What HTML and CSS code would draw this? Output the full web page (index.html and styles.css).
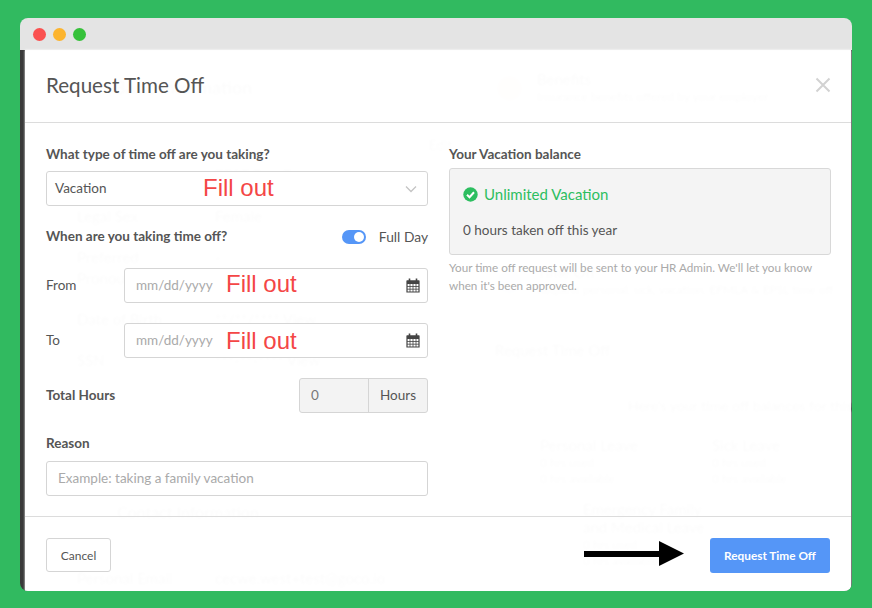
FILE: index.html
```html
<!DOCTYPE html>
<html lang="en">
<head>
    <meta charset="UTF-8">
    <meta name="viewport" content="width=device-width, initial-scale=1.0">
    <title>Request Time Off</title>
    <link rel="stylesheet" href="styles.css">
</head>
<body>

    <div class="window">
        <div class="titlebar">
            <span class="dot dot-red"></span>
            <span class="dot dot-yellow"></span>
            <span class="dot dot-green"></span>
        </div>

        <div class="screen">
            <!-- Page behind the modal, shows through very faintly -->
            <div class="page">
                <div class="page-left">
                    <div class="page-head"><span class="page-icon"></span>Basic Information</div>
                    <div class="page-edit">Edit</div>
                    <div class="page-row"><span>Legal Name</span><span>TEST Test Test</span></div>
                    <div class="page-row"><span>Legal Sex</span><span>Female</span></div>
                    <div class="page-row"><span>Preferred<br>Pronouns</span><span>-</span></div>
                    <div class="page-row"><span>Date of Birth</span><span>**/**/**** View</span></div>
                    <div class="page-row"><span>SSN</span><span>***-**-**** View</span></div>
                    <div class="page-head page-contact"><span class="page-icon"></span>Contact Information</div>
                    <div class="page-row page-email"><span>Personal Email</span><span>cecwe.west+test@goco.io</span></div>
                </div>
                <div class="page-right">
                    <div class="page-card">
                        <span class="page-icon page-icon-warm"></span>
                        <div><b>Benefits</b><br>Insurance benefits offered by your employer</div>
                    </div>
                    <div class="page-card page-feedback">
                        <span class="page-icon page-icon-blue"></span>
                        <div><b>Feedback</b></div>
                    </div>
                    <div class="page-card page-timeoff">
                        <span class="page-icon page-icon-blue"></span>
                        <div><b>Time Off</b><br>Request personal, sick, vacation, EFMLA &amp; EPSL time off</div>
                    </div>
                    <div class="page-request">Request Time Off</div>
                    <div class="page-note">Here's your time off balances for this</div>
                    <div class="page-leaves">
                        <div><b>Personal Leave</b><br>0 hrs used<br>0 hrs available</div>
                        <div><b>Sick Leave</b><br>0 hrs used<br>0 hrs available</div>
                    </div>
                    <div class="page-family"><b>Emergency Family<br>and Medical Leave</b><br>0 hrs used<br>0 hrs available</div>
                </div>
            </div>

            <div class="modal">
                <div class="modal-header">
                    <h1>Request Time Off</h1>
                    <svg class="close" width="16" height="16" viewBox="0 0 16 16">
                        <path d="M1.5 1.5 L14.5 14.5 M14.5 1.5 L1.5 14.5" stroke="#d2d2d2" stroke-width="2" fill="none"/>
                    </svg>
                </div>

                <div class="modal-body">
                    <div class="col">
                        <label class="label">What type of time off are you taking?</label>
                        <div class="field field-select">
                            <span>Vacation</span>
                            <svg width="12" height="8" viewBox="0 0 12 8">
                                <path d="M1 1.5 L6 6.5 L11 1.5" stroke="#c4c4c4" stroke-width="1.3" fill="none"/>
                            </svg>
                            <span class="fill-note">Fill out</span>
                        </div>

                        <div class="when-row">
                            <label class="label">When are you taking time off?</label>
                            <div class="toggle-wrap">
                                <span class="toggle"><span class="knob"></span></span>
                                <span class="toggle-text">Full Day</span>
                            </div>
                        </div>

                        <div class="date-row">
                            <span class="date-label">From</span>
                            <div class="field field-date">
                                <span class="placeholder">mm/dd/yyyy</span>
                                <svg width="14" height="15" viewBox="0 0 14 15">
                                    <use href="#calendar"/>
                                </svg>
                                <span class="fill-note">Fill out</span>
                            </div>
                        </div>

                        <div class="date-row date-row-to">
                            <span class="date-label">To</span>
                            <div class="field field-date">
                                <span class="placeholder">mm/dd/yyyy</span>
                                <svg width="14" height="15" viewBox="0 0 14 15">
                                    <use href="#calendar"/>
                                </svg>
                                <span class="fill-note">Fill out</span>
                            </div>
                        </div>

                        <div class="hours-row">
                            <label class="label">Total Hours</label>
                            <div class="hours">
                                <span class="hours-value">0</span>
                                <span class="hours-unit">Hours</span>
                            </div>
                        </div>

                        <label class="label label-reason">Reason</label>
                        <div class="field field-reason">
                            <span class="placeholder">Example: taking a family vacation</span>
                        </div>
                    </div>

                    <div class="col">
                        <label class="label">Your Vacation balance</label>
                        <div class="balance">
                            <div class="balance-title">
                                <svg width="15" height="15" viewBox="0 0 15 15">
                                    <circle cx="7.5" cy="7.5" r="7.2" fill="#2dbe60"/>
                                    <path d="M4 7.8 L6.5 10.2 L11 5.3" stroke="#fff" stroke-width="2" fill="none"/>
                                </svg>
                                <span>Unlimited Vacation</span>
                            </div>
                            <div class="balance-text">0 hours taken off this year</div>
                        </div>
                        <p class="help">Your time off request will be sent to your HR Admin. We'll let you know when it's been approved.</p>
                    </div>
                </div>

                <div class="modal-footer">
                    <button class="btn-cancel">Cancel</button>
                    <button class="btn-submit">Request Time Off</button>
                    <svg class="arrow" width="100" height="25" viewBox="0 0 100 25">
                        <path d="M0 10 H75 V0 L100 12.5 L75 25 V16 H0 Z" fill="#000"/>
                    </svg>
                </div>
            </div>
        </div>
    </div>

    <!-- Shared calendar icon -->
    <svg class="defs" width="0" height="0">
        <symbol id="calendar" viewBox="0 0 14 15">
            <path d="M1 3 H13 V14 H1 Z" fill="none" stroke="#444" stroke-width="1.2"/>
            <path d="M1 2.5 H13 V6 H1 Z" fill="#444"/>
            <path d="M3.5 0.5 V4 M10.5 0.5 V4" stroke="#444" stroke-width="1.6"/>
            <path d="M1 8.5 H13 M1 11.2 H13 M4 6 V14 M7 6 V14 M10 6 V14" stroke="#444" stroke-width="0.8"/>
        </symbol>
    </svg>

</body>
</html>
```

FILE: styles.css
```css
* {
    box-sizing: border-box;
}
body {
    margin: 0;
    background-color: #31ba60;
    font-family: 'Lato', 'Open Sans', sans-serif;
    font-size: 13.5px;
    color: #555;
    height: 608px;
    overflow: hidden;
}
.defs {
    position: absolute;
}
.window {
    width: 832px;
    height: 573px;
    margin: 18px 0 0 20px;
    display: flex;
    flex-direction: column;
    border-radius: 8px;
    overflow: hidden;
}
.titlebar {
    height: 32px;
    flex: none;
    background-color: #e4e4e4;
    display: flex;
    align-items: center;
    gap: 7px;
    padding-left: 13px;
}
.dot {
    width: 13px;
    height: 13px;
    border-radius: 50%;
}
.dot-red {
    background-color: #fa5150;
}
.dot-yellow {
    background-color: #fcb42e;
}
.dot-green {
    background-color: #36c13a;
}
.screen {
    position: relative;
    flex: 1;
    background-color: #3a3a3a;
    padding: 0 1px 0 5px;
    min-height: 0;
}

/* Page under the modal */
.page {
    height: 100%;
    background-color: #fff;
    display: grid;
    grid-template-columns: 445px 1fr;
    overflow: hidden;
    color: #333;
    filter: blur(1px);
}
.page-left {
    padding: 25px 0 0 52px;
}
.page-head {
    display: flex;
    align-items: center;
    gap: 12px;
    font-size: 18px;
    line-height: 21px;
}
.page-icon {
    display: inline-block;
    width: 25px;
    height: 25px;
    flex: none;
    border-radius: 50%;
    background-color: #d8e2ee;
}
.page-icon-warm {
    background-color: #f3b9a5;
}
.page-icon-blue {
    background-color: #bcd0ec;
}
.page-edit {
    text-align: right;
    padding-right: 18px;
    margin-top: 35px;
    line-height: 20px;
}
.page-row {
    display: grid;
    grid-template-columns: 138px 1fr;
    padding: 10px 0;
    font-size: 15px;
    line-height: 21px;
}
.page-contact {
    margin-top: 118px;
    gap: 15px;
    font-size: 16px;
}
.page-email {
    margin-top: 34px;
}
.page-right {
    padding: 21px 0 0 27px;
    font-size: 12px;
    line-height: 16px;
    white-space: nowrap;
}
.page-right b {
    font-size: 15px;
    font-weight: 400;
}
.page-card {
    display: flex;
    align-items: center;
    gap: 15px;
}
.page-feedback {
    margin-top: 72px;
}
.page-timeoff {
    margin-top: 62px;
}
.page-request {
    margin: 44px 0 0 -2px;
    font-size: 15px;
}
.page-note {
    margin: 40px 0 0 131px;
    font-size: 14px;
}
.page-leaves {
    display: grid;
    grid-template-columns: 172px 1fr;
    margin: 23px 0 0 43px;
}
.page-family {
    margin: 14px 0 0 86px;
}

/* Modal */
.modal {
    position: absolute;
    top: 0;
    left: 5px;
    right: 1px;
    bottom: 0;
    background-color: rgba(255, 255, 255, 0.98);
    display: flex;
    flex-direction: column;
}
.modal-header {
    height: 73px;
    flex: none;
    border-bottom: 1px solid #dcdcdc;
    display: flex;
    align-items: center;
    justify-content: space-between;
    padding: 0 20px 3px 21px;
}
.modal-header h1 {
    margin: 0;
    font-size: 20.6px;
    font-weight: 400;
    color: #555;
}
.modal-body {
    height: 393px;
    flex: none;
    display: grid;
    grid-template-columns: 382px 382px;
    column-gap: 21px;
    padding: 23px 21px 0;
}
.col {
    display: flex;
    flex-direction: column;
}
.label {
    display: block;
    font-weight: 700;
    font-size: 13.5px;
    line-height: 17px;
    color: #555;
}
.field {
    position: relative;
    height: 35px;
    flex: none;
    background-color: #fff;
    border: 1px solid #d5d5d5;
    border-radius: 3px;
    display: flex;
    align-items: center;
    justify-content: space-between;
    padding: 0 7px 0 11px;
}
.field-select {
    margin-top: 8px;
    padding: 0 10px 0 8px;
}
.field-select .fill-note {
    left: 156px;
    top: 2px;
}
.field-date .placeholder,
.field-reason .placeholder,
.field-select > span:first-child {
    margin-bottom: 2px;
}
.placeholder {
    color: #aaa;
}
.fill-note {
    position: absolute;
    left: 101px;
    top: 1px;
    font-family: 'Liberation Sans', Arial, sans-serif;
    font-size: 24px;
    line-height: 28px;
    color: #f44646;
}
.date-row-to .fill-note {
    top: 3px;
}
.when-row {
    display: flex;
    justify-content: space-between;
    align-items: center;
    margin-top: 22px;
}
.toggle-wrap {
    display: flex;
    align-items: center;
    gap: 13px;
}
.toggle-text {
    font-size: 13.8px;
}
.toggle {
    width: 24px;
    height: 14px;
    border-radius: 7px;
    background-color: #5596f7;
    display: flex;
    align-items: center;
    justify-content: flex-end;
    padding-right: 2px;
}
.knob {
    width: 10px;
    height: 10px;
    border-radius: 50%;
    background-color: #fff;
}
.date-row {
    display: grid;
    grid-template-columns: 78px 304px;
    align-items: center;
    margin-top: 23px;
}
.date-label {
    margin-bottom: 2px;
}
.date-row-to {
    margin-top: 20px;
}
.hours-row {
    display: flex;
    justify-content: space-between;
    align-items: center;
    margin-top: 20px;
}
.hours {
    display: flex;
    width: 129px;
    height: 35px;
    border: 1px solid #d5d5d5;
    border-radius: 3px;
    background-color: #f3f3f3;
    line-height: 33px;
}
.hours-value {
    width: 69px;
    padding-left: 11px;
    border-right: 1px solid #d5d5d5;
    color: #777;
}
.hours-unit {
    flex: 1;
    text-align: center;
}
.label-reason {
    margin-top: 22px;
}
.field-reason {
    margin-top: 9px;
}
.balance {
    margin-top: 5px;
    height: 87px;
    background-color: #f4f4f4;
    border: 1px solid #d8d8d8;
    border-radius: 3px;
    padding: 16px 13px;
}
.balance-title {
    display: flex;
    align-items: center;
    gap: 6px;
    font-size: 15px;
    line-height: 18px;
    color: #2dbe60;
}
.balance-text {
    margin-top: 19px;
    line-height: 17px;
}
.help {
    margin: 4px 0 0;
    font-size: 11.7px;
    line-height: 17.5px;
    color: #aaa;
}
.modal-footer {
    position: relative;
    flex: 1;
    border-top: 1px solid #dcdcdc;
    display: flex;
    justify-content: space-between;
    align-items: flex-start;
    padding: 21px 21px 0;
}
.btn-cancel {
    width: 65px;
    height: 34px;
    background-color: #fff;
    border: 1px solid #d5d5d5;
    border-radius: 3px;
    font-family: inherit;
    font-size: 12px;
    color: #555;
}
.btn-submit {
    width: 120px;
    height: 35px;
    background-color: #5596f7;
    border: none;
    border-radius: 3px;
    font-family: inherit;
    font-size: 11.8px;
    font-weight: 700;
    color: #fff;
}
.arrow {
    position: absolute;
    left: 559px;
    top: 24px;
}
```
